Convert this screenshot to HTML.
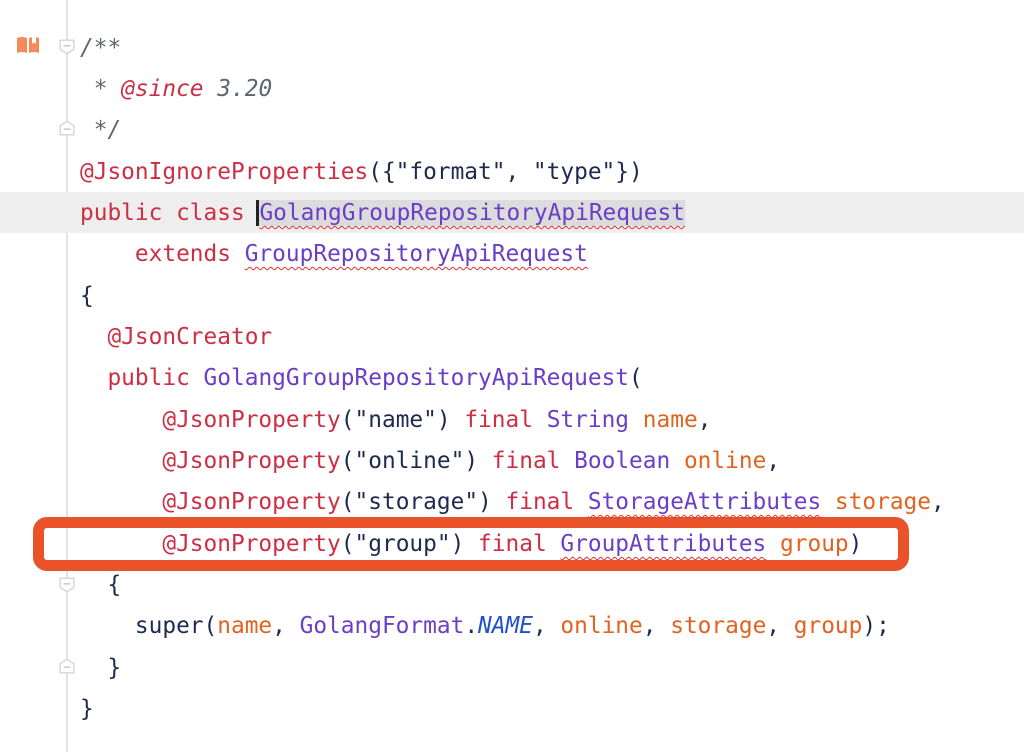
<!DOCTYPE html>
<html><head><meta charset="utf-8"><style>
html,body{margin:0;padding:0;width:1024px;height:752px;background:#fff;overflow:hidden;position:relative}
.gut{position:absolute;left:66px;top:0;width:2px;height:752px;background:#e3e3e3}
.hl{position:absolute;left:0;top:192px;width:1024px;height:41px;background:#eeeeee}
.l{position:absolute;left:80px;height:41px;line-height:43px;font-family:"DejaVu Sans Mono","Liberation Mono",monospace;font-size:22.8px;white-space:pre;color:#1d2a4e}
.k{color:#cc2f44}.t{color:#6a3ec6}.v{color:#e0631f}.c{color:#5f6670;font-style:italic}.s{color:#1d2a4e}.i{color:#1f50d0;font-style:italic}
.w{text-decoration:underline wavy #e0302c;text-decoration-thickness:1px;text-underline-offset:5px}
.sel{background:#dcdcdc}
.cur{border-left:3px solid #222;margin-left:-2px}
.fold{position:absolute;left:59px;width:16px;height:16px}
.box{position:absolute;left:33px;top:517px;width:854px;height:32px;border:11px solid #ea5229;border-radius:14px}
</style></head><body>
<div class="gut"></div>
<div class="hl"></div>
<svg style="position:absolute;left:16px;top:36px" width="24" height="18" viewBox="0 0 24 18"><path d="M1 2 Q6 0 11 2 V17 Q6 15 1 17 Z M13 2 Q18 0 23 2 V17 Q18 15 13 17 Z" fill="#f58a5c"/><path d="M16 1 V8 L18 6.5 L20 8 V1" fill="#fff"/></svg>
<svg class="fold" style="top:39px" viewBox="0 0 14 14"><path d="M1 1H13V9L7 13L1 9Z" fill="#fff" stroke="#d4d4d4" stroke-width="1.2"/><path d="M4 6H10" stroke="#c4c4c4" stroke-width="1.2"/></svg>
<svg class="fold" style="top:120px" viewBox="0 0 14 14"><path d="M1 13H13V5L7 1L1 5Z" fill="#fff" stroke="#d4d4d4" stroke-width="1.2"/><path d="M4 8H10" stroke="#c4c4c4" stroke-width="1.2"/></svg>
<svg class="fold" style="top:577px" viewBox="0 0 14 14"><path d="M1 1H13V9L7 13L1 9Z" fill="#fff" stroke="#d4d4d4" stroke-width="1.2"/><path d="M4 6H10" stroke="#c4c4c4" stroke-width="1.2"/></svg>
<svg class="fold" style="top:658px" viewBox="0 0 14 14"><path d="M1 13H13V5L7 1L1 5Z" fill="#fff" stroke="#d4d4d4" stroke-width="1.2"/><path d="M4 8H10" stroke="#c4c4c4" stroke-width="1.2"/></svg>
<div class="box"></div>
<div class="l c" style="top:27px">/**</div>
<div class="l c" style="top:68px"> * <span class="k">@since</span> 3.20</div>
<div class="l c" style="top:109px"> */</div>
<div class="l" style="top:151px"><span class="k">@JsonIgnoreProperties</span>({"format", "type"})</div>
<div class="l" style="top:192px"><span class="k">public class </span><span class="t w sel cur">GolangGroupRepositoryApiRequest</span></div>
<div class="l" style="top:233px">    <span class="k">extends</span> <span class="t w">GroupRepositoryApiRequest</span></div>
<div class="l" style="top:275px">{</div>
<div class="l" style="top:316px">  <span class="k">@JsonCreator</span></div>
<div class="l" style="top:357px">  <span class="k">public</span> <span class="t">GolangGroupRepositoryApiRequest</span>(</div>
<div class="l" style="top:399px">      <span class="k">@JsonProperty</span>("name") <span class="k">final</span> <span class="t">String</span> <span class="v">name</span>,</div>
<div class="l" style="top:440px">      <span class="k">@JsonProperty</span>("online") <span class="k">final</span> <span class="t">Boolean</span> <span class="v">online</span>,</div>
<div class="l" style="top:481px">      <span class="k">@JsonProperty</span>("storage") <span class="k">final</span> <span class="t w">StorageAttributes</span> <span class="v">storage</span>,</div>
<div class="l" style="top:523px">      <span class="k">@JsonProperty</span>("group") <span class="k">final</span> <span class="t w">GroupAttributes</span> <span class="v">group</span>)</div>
<div class="l" style="top:564px">  {</div>
<div class="l" style="top:605px">    super(<span class="v">name</span>, <span class="t">GolangFormat</span>.<span class="i">NAME</span>, <span class="v">online</span>, <span class="v">storage</span>, <span class="v">group</span>);</div>
<div class="l" style="top:647px">  }</div>
<div class="l" style="top:688px">}</div>
</body></html>
